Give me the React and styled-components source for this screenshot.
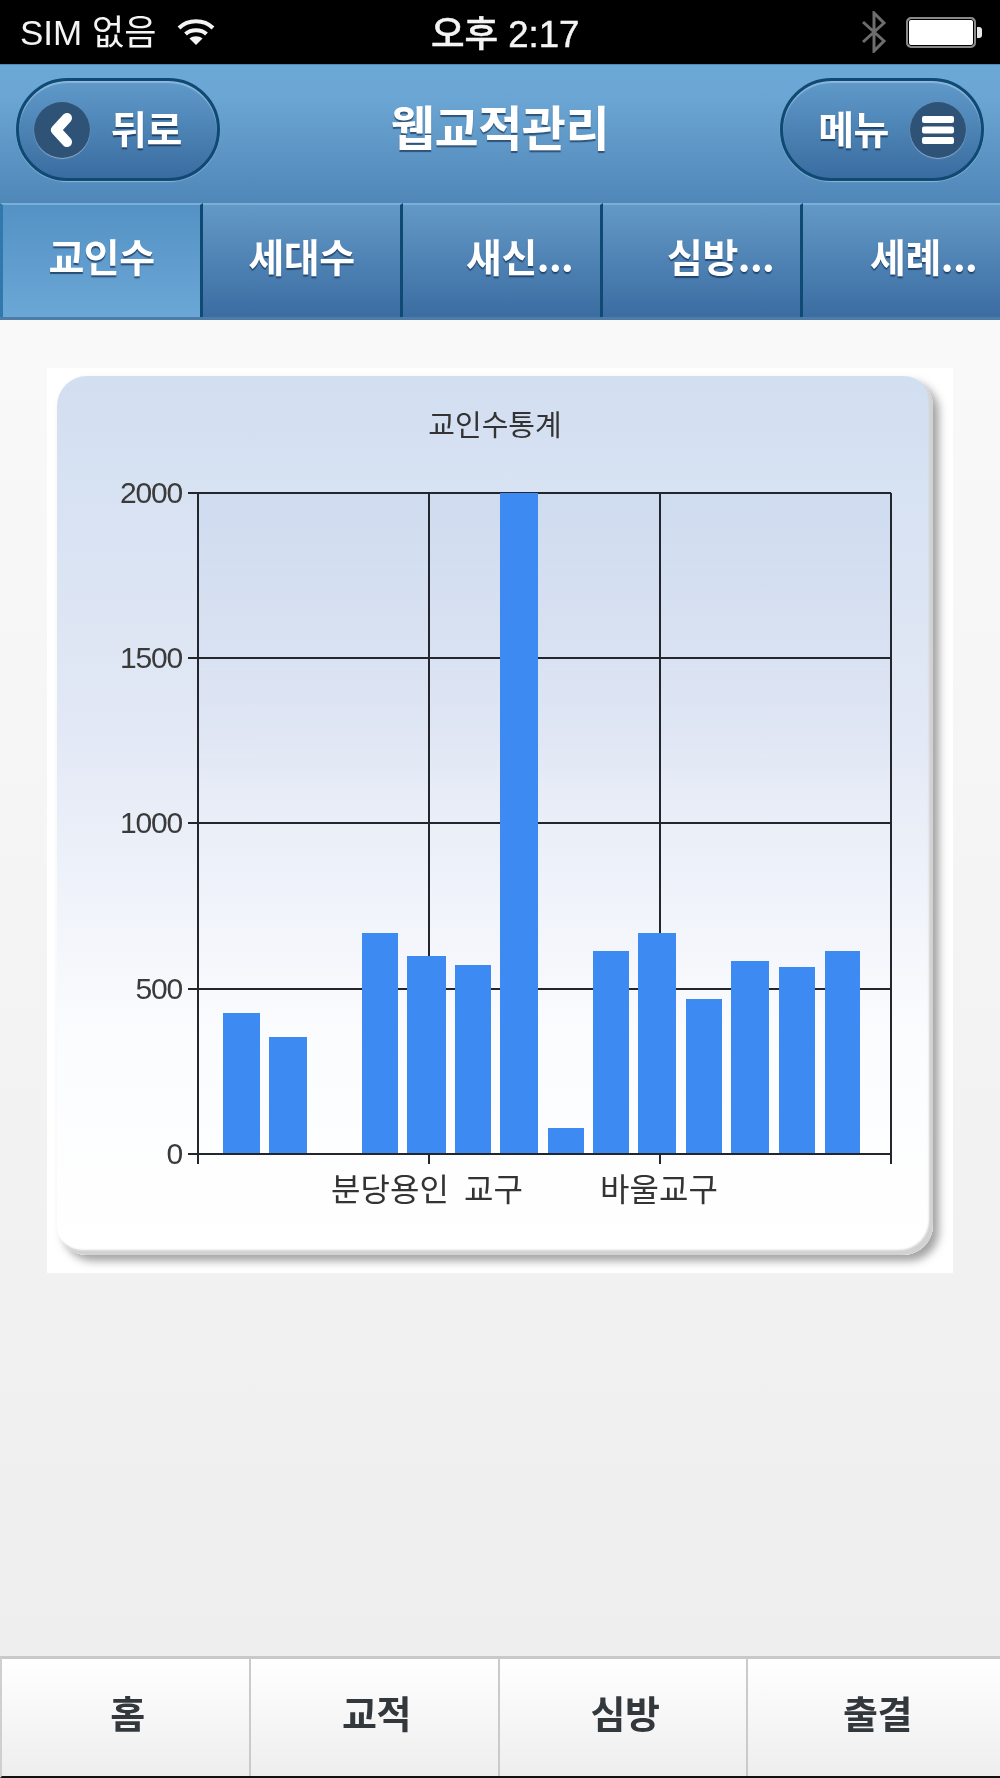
import React from "react";
import styled, { createGlobalStyle } from "styled-components";

const Global = createGlobalStyle`
  html, body { margin: 0; padding: 0; background: #000; }
  * { box-sizing: border-box; }
  body { font-family: "Noto Sans CJK KR", "Noto Sans", sans-serif; }
`;
const Page = styled.div`
  width: 1000px; height: 1778px; display: flex; flex-direction: column; overflow: hidden;
`;
const StatusBar = styled.div`
  height: 64px; flex: none; background: #000; color: #f4f4f4; display: flex; align-items: center;
  padding: 0 17px 0 20px; position: relative; font-size: 32px;
`;
const Carrier = styled.span`
  font-family: "Liberation Sans", "Noto Sans CJK KR", sans-serif; font-weight: 400; font-size: 35px; line-height: 1; filter: blur(.3px); white-space: nowrap;
`;
const Wifi = styled.svg` margin-left: 21px; `;
const Clock = styled.span`
  position: absolute; left: 431px; top: 17px; line-height: 1; font-size: 36.5px; font-weight: 500; filter: blur(.3px); white-space: nowrap;
  font-family: "Liberation Sans", "Noto Sans CJK KR", sans-serif; -webkit-text-stroke: .5px #f4f4f4;
`;
const StatusRight = styled.div` margin-left: auto; display: flex; align-items: center; gap: 19px; `;
const Battery = styled.div`
  width: 70px; height: 31px; margin-right: 7px; border: 2px solid #8a8a8a; border-radius: 5px; background: #fff; box-shadow: inset 0 0 0 1px #000; position: relative;
  &::after { content: ""; position: absolute; right: -8px; top: 8px; width: 5px; height: 11px; background: #e8e8e8; border-radius: 0 3px 3px 0; }
`;
const Header = styled.header`
  height: 139px; flex: none; background: linear-gradient(#6ca8d6 0%, #6ba5d3 25%, #4f87b8 100%); display: flex; align-items: center;
  justify-content: space-between; padding: 0 16px 9px; position: relative; border-top: 1px solid #4f8ab9;
`;
const Title = styled.h1`
  position: absolute; left: 0; right: 0; top: 28px; margin: 0; text-align: center; color: #fff; font-size: 48px; line-height: 64px; font-weight: 700;
  text-shadow: 0 2px 1px rgba(30, 60, 95, .75); filter: blur(.5px); letter-spacing: -.5px;
`;
const PillButton = styled.button`
  width: 204px; height: 103px; border-radius: 52px; border: 3px solid #0f4a75; background: linear-gradient(#5f9aca, #3a6ca0);
  box-shadow: 0 1px 1px rgba(255,255,255,.35), inset 0 2px 1px rgba(255,255,255,.3); display: flex; align-items: center; padding: 0 15px;
  color: #fff; font-family: "Noto Sans CJK KR", sans-serif; font-weight: 700; justify-content: ${(p) => (p.$right ? "flex-end" : "flex-start")};
  gap: 21px; flex: none;
`;
const ButtonLabel = styled.span`
  text-shadow: 0 2px 1px rgba(20, 50, 85, .8); filter: blur(.5px); line-height: 1; letter-spacing: -.5px; font-size: 39px; margin-bottom: 4px;
`;
const IconDisc = styled.span`
  width: 56px; height: 56px; border-radius: 50%; background: #2f5277; box-shadow: 0 1px 1px rgba(255,255,255,.4); display: flex; align-items: center; justify-content: center; flex: none;
`;
const TabBar = styled.nav`
  height: 117px; flex: none; display: grid; grid-template-columns: 203px 200px 200px 200px 197px;
  border-bottom: 3px solid #4d7ca8; background: #3f70a4;
`;
const Tab = styled.div`
  display: flex; align-items: center; justify-content: ${(p) => (p.$shift ? "flex-start" : "center")}; padding-left: ${(p) => p.$shift || 0}px; padding-bottom: 11px;
  background: ${(p) => (p.$active ? "linear-gradient(#5492c5, #6ba7d6)" : "linear-gradient(#6399c6, #3b6ca2)")};
  border-top: 2px solid #79b0d8; border-right: 3px solid #0e4a72; border-left: ${(p) => (p.$active ? "3px solid #2f79ad" : "0")};
  &:last-child { border-right: 0; }
  color: #fff; font-size: 39px; font-weight: 700; line-height: 1;
`;
const TabLabel = styled.span`
  text-shadow: 0 2px 1px rgba(20, 50, 85, .75); filter: blur(.5px); letter-spacing: -.5px; white-space: nowrap;
`;
const Main = styled.main`
  flex: 1; background: linear-gradient(#f9f9f9, #eeeeee); padding: 48px 47px 0;
`;
const ChartFrame = styled.div`
  width: 906px; height: 905px; background: #fff; padding: 8px 20px 18px 10px;
`;
const ChartCard = styled.div`
  width: 876px; height: 879px; border-radius: 30px; background: linear-gradient(#d2dff1 0%, #e2e8f5 40%, #fbfcfe 75%, #ffffff 100%);
  box-shadow: 6px 6px 8px rgba(90,90,90,.55), inset -4px -5px 2px #d2d2d2; overflow: hidden;
`;
const ChartSvg = styled.svg`
  display: block; filter: blur(.5px);
`;
const PlotLine = styled.line` stroke: #23262d; stroke-width: 2; `;
const Bar = styled.rect` fill: #3d8af2; `;
const AxisText = styled.text`
  font-family: "Liberation Sans", sans-serif; font-size: 30px; fill: #3a3a3a; letter-spacing: -1.2px; text-anchor: end;
`;
const CatText = styled.text`
  font-family: "Noto Sans CJK KR", sans-serif; font-size: ${(p) => p.$size}px; fill: #333; text-anchor: middle; font-weight: 400; word-spacing: 8px;
`;
const BottomNav = styled.nav`
  height: 122px; flex: none; display: grid; grid-template-columns: 249px 249px 248px 250px; background: linear-gradient(#ffffff, #eeeeee);
  border-top: 3px solid #c9c9c9; border-bottom: 2px solid #111; border-left: 2px solid #cfcfcf;
`;
const NavItem = styled.div`
  display: flex; align-items: center; justify-content: center; font-size: 38px; font-weight: 700; color: #33383d; border-right: 2px solid #cacaca;
  padding: 0 0 11px 4px; &:last-child { border-right: 0; padding-left: 9px; }
`;
const NavLabel = styled.span` filter: blur(.5px); letter-spacing: -.5px; line-height: 1; `;

const bars = [
  [223, 260, 1013], [269, 307, 1037], [362, 398, 933], [407, 446, 956], [455, 491, 965], [500, 538, 493],
  [548, 584, 1128], [593, 629, 951], [638, 676, 933], [686, 722, 999], [731, 769, 961], [779, 815, 967], [825, 860, 951],
];
const yTicks = [[493, "2000"], [658, "1500"], [823, "1000"], [989, "500"], [1154, "0"]];
const xGrid = [198, 429, 660, 891];

function Chart() {
  return (
    <ChartSvg width="876" height="879" viewBox="57 376 876 879">
      <defs>
        <linearGradient id="plotTint" x1="0" y1="0" x2="0" y2="1">
          <stop offset="0" stopColor="#c3d2eb" stopOpacity=".4" />
          <stop offset=".45" stopColor="#c3d2eb" stopOpacity="0" />
        </linearGradient>
      </defs>
      <rect x="198" y="493" width="693" height="661" fill="url(#plotTint)" />
      {yTicks.map(([y, t]) => (
        <React.Fragment key={t}>
          <PlotLine x1="188" x2="891" y1={y} y2={y} />
          <AxisText x="182" y={y + 10}>{t}</AxisText>
        </React.Fragment>
      ))}
      {xGrid.map((x) => <PlotLine key={x} x1={x} x2={x} y1="493" y2="1164" />)}
      {bars.map(([a, b, top]) => <Bar key={a} x={a} y={top} width={b - a} height={1153 - top} />)}
      <CatText $size={29} x="495" y="436">교인수통계</CatText>
      <CatText $size={32} x="427" y="1201">분당용인 교구</CatText>
      <CatText $size={32} x="659" y="1201">바울교구</CatText>
    </ChartSvg>
  );
}

export default function App() {
  return (
    <Page>
      <Global />
      <StatusBar>
        <Carrier>SIM 없음</Carrier>
        <Wifi width="38" height="30" viewBox="0 0 38 30" fill="none" stroke="#f4f4f4" strokeWidth="4">
          <path d="M2 11C11 2 27 2 36 11" />
          <path d="M8.5 17C14 12 24 12 29.5 17" />
          <path d="M19 28L12.5 21.5C16 18.5 22 18.5 25.500 21.500Z" fill="#f4f4f4" stroke="none" />
        </Wifi>
        <Clock>오후 2:17</Clock>
        <StatusRight>
          <svg width="26" height="42" viewBox="0 0 26 42" fill="none" stroke="#6d6d6d" strokeWidth="3">
            <path d="M2 11L23 30L13 40V2L23 12L2 31" />
          </svg>
          <Battery />
        </StatusRight>
      </StatusBar>
      <Header>
        <Title>웹교적관리</Title>
        <PillButton>
          <IconDisc>
            <svg width="30" height="38" viewBox="0 0 30 38" fill="none" stroke="#fff" strokeWidth="10" strokeLinecap="round" strokeLinejoin="round">
              <path d="M20 7L9 19L20 31" />
            </svg>
          </IconDisc>
          <ButtonLabel>뒤로</ButtonLabel>
        </PillButton>
        <PillButton $right>
          <ButtonLabel>메뉴</ButtonLabel>
          <IconDisc>
            <svg width="34" height="30" viewBox="0 0 34 30" fill="#fff">
              <rect x="1" y="1" width="32" height="7" rx="2" />
              <rect x="1" y="11.500" width="32" height="7" rx="2" />
              <rect x="1" y="22" width="32" height="7" rx="2" />
            </svg>
          </IconDisc>
        </PillButton>
      </Header>
      <TabBar>
        <Tab $active><TabLabel>교인수</TabLabel></Tab>
        <Tab><TabLabel>세대수</TabLabel></Tab>
        <Tab $shift={63}><TabLabel>새신...</TabLabel></Tab>
        <Tab $shift={64}><TabLabel>심방...</TabLabel></Tab>
        <Tab $shift={67}><TabLabel>세례...</TabLabel></Tab>
      </TabBar>
      <Main>
        <ChartFrame>
          <ChartCard><Chart /></ChartCard>
        </ChartFrame>
      </Main>
      <BottomNav>
        <NavItem><NavLabel>홈</NavLabel></NavItem>
        <NavItem><NavLabel>교적</NavLabel></NavItem>
        <NavItem><NavLabel>심방</NavLabel></NavItem>
        <NavItem><NavLabel>출결</NavLabel></NavItem>
      </BottomNav>
    </Page>
  );
}
